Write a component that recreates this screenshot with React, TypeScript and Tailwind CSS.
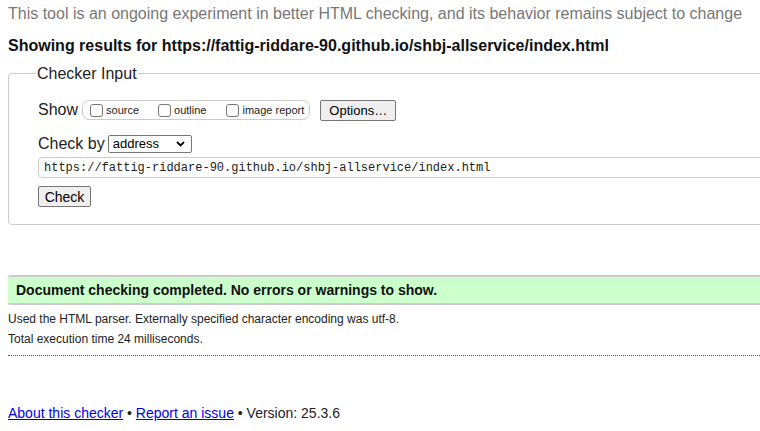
import React from "react";

function Box() {
  return (
    <span className="inline-block w-[13px] h-[13px] border border-[#767676] rounded-[3px] bg-white align-[-2px] mr-[3px]" />
  );
}

export default function App() {
  return (
    <div className="w-[760px] h-[431px] overflow-hidden bg-white" style={{ fontFamily: '"Liberation Sans", Arial, sans-serif' }}>
      <div className="w-[900px] px-2 text-black">
        <p className="text-[16px] leading-[19px] text-[#777] pt-[4px]">
          This tool is an ongoing experiment in better HTML checking, and its behavior remains subject to change
        </p>
        <p className="text-[16px] leading-[19px] font-bold text-[#111] mt-[13px]">
          Showing results for https://fattig-riddare-90.github.io/shbj-allservice/index.html
        </p>
        <fieldset className="mt-[9px] border border-[#ccc] rounded-[4px] px-[29px] pb-[17px] min-w-0">
          <legend className="text-[16px] leading-[19px] text-[#222] px-[1px] ml-[-2px]">Checker Input</legend>
          <div className="flex items-center mt-[17px] h-[20px]">
            <span className="text-[16px] text-[#222] mr-[4px]">Show</span>
            <div className="flex items-center h-[20px] border border-[#ccc] rounded-[7px] pl-[7px] pr-[5px] text-[11px] text-[#222]">
              <label className="flex items-center"><Box /><span className="mt-[1px]">source</span></label>
              <label className="flex items-center ml-[19px]"><Box /><span className="mt-[1px]">outline</span></label>
              <label className="flex items-center ml-[20px]"><Box /><span className="mt-[1px]">image report</span></label>
            </div>
            <button className="ml-[10px] h-[21px] w-[76px] border border-[#767676] rounded-[2px] bg-[#efefef] text-[13px] text-black leading-none">Options…</button>
          </div>
          <div className="flex items-center mt-[15px] h-[18px]">
            <span className="text-[16px] text-[#222] mr-[3px]">Check by</span>
            <div className="flex items-center justify-between h-[18px] w-[84px] border border-[#767676] rounded-[2px] pl-[4px] pr-[6px] text-[13px]">
              <span>address</span>
              <svg width="9" height="6" viewBox="0 0 9 6"><path d="M1 1l3.5 3.5L8 1" fill="none" stroke="#000" strokeWidth="1.8" /></svg>
            </div>
          </div>
          <div className="mt-[4px] h-[21px] w-[800px] border border-[#ccc] rounded-[4px] flex items-center pl-[5px] text-[12px] text-[#222]" style={{ fontFamily: '"Liberation Mono", Consolas, monospace' }}>
            https://fattig-riddare-90.github.io/shbj-allservice/index.html
          </div>
          <button className="mt-[8px] h-[21px] w-[53px] border border-[#767676] rounded-[2px] bg-[#efefef] text-[14px] text-black leading-none block">Check</button>
        </fieldset>
        <div className="mt-[50px] h-[30px] bg-[#ccffcc] border-y-2 border-[#ccc] rounded-[2px] flex items-center pl-[8px] text-[14px] font-bold text-[#111]">
          Document checking completed. No errors or warnings to show.
        </div>
        <p className="text-[12px] leading-[14px] text-[#222] mt-[7px]">Used the HTML parser. Externally specified character encoding was utf-8.</p>
        <p className="text-[12px] leading-[14px] text-[#222] mt-[6px]">Total execution time 24 milliseconds.</p>
        <div className="mt-[9px] border-t border-dotted border-[#555]" />
        <p className="mt-[47px] text-[14px] text-[#222]">
          <a href="#" className="text-[#0000ee] underline">About this checker</a> •{" "}
          <a href="#" className="text-[#0000ee] underline">Report an issue</a> • Version: 25.3.6
        </p>
      </div>
    </div>
  );
}
